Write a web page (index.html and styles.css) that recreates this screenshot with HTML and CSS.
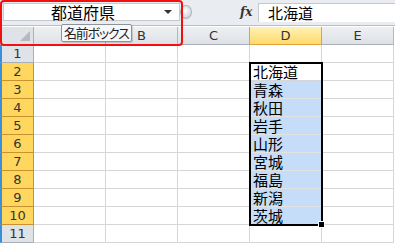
FILE: index.html
```html
<!DOCTYPE html>
<html lang="ja">
<head>
<meta charset="utf-8">
<link rel="stylesheet" href="styles.css">
</head>
<body>
<div class="app">
  <div class="fbar">
    <div class="namebox">
      <span class="nb-text">都道府県</span>
      <span class="nb-arrow"></span>
    </div>
    <div class="grip"></div>
    <div class="fx">fx</div>
    <div class="finput">北海道</div>
  </div>
  <div class="sheet">
    <div class="corner"><span class="tri"></span></div>
    <div class="ch">A</div>
    <div class="ch">B</div>
    <div class="ch">C</div>
    <div class="ch sel">D</div>
    <div class="ch">E</div>

    <div class="rh">1</div><div class="c"></div><div class="c"></div><div class="c"></div><div class="c"></div><div class="c"></div>
    <div class="rh sel">2</div><div class="c"></div><div class="c"></div><div class="c"></div><div class="c act">北海道</div><div class="c"></div>
    <div class="rh sel">3</div><div class="c"></div><div class="c"></div><div class="c"></div><div class="c hi">青森</div><div class="c"></div>
    <div class="rh sel">4</div><div class="c"></div><div class="c"></div><div class="c"></div><div class="c hi">秋田</div><div class="c"></div>
    <div class="rh sel">5</div><div class="c"></div><div class="c"></div><div class="c"></div><div class="c hi">岩手</div><div class="c"></div>
    <div class="rh sel">6</div><div class="c"></div><div class="c"></div><div class="c"></div><div class="c hi">山形</div><div class="c"></div>
    <div class="rh sel">7</div><div class="c"></div><div class="c"></div><div class="c"></div><div class="c hi">宮城</div><div class="c"></div>
    <div class="rh sel">8</div><div class="c"></div><div class="c"></div><div class="c"></div><div class="c hi">福島</div><div class="c"></div>
    <div class="rh sel">9</div><div class="c"></div><div class="c"></div><div class="c"></div><div class="c hi">新潟</div><div class="c"></div>
    <div class="rh sel">10</div><div class="c"></div><div class="c"></div><div class="c"></div><div class="c hi">茨城</div><div class="c"></div>
    <div class="rh">11</div><div class="c"></div><div class="c"></div><div class="c"></div><div class="c"></div><div class="c"></div>

    <div class="selbox"><span class="handle"></span></div>
  </div>
  <div class="redmark"></div>
  <div class="tip">名前ボックス</div>
</div>
</body>
</html>
```

FILE: styles.css
```css
html, body {
  margin: 0;
  padding: 0;
  background: #fff;
}
.app {
  position: relative;
  width: 395px;
  height: 244px;
  overflow: hidden;
  font-family: "Noto Sans CJK JP", "DejaVu Sans", sans-serif;
}
.fbar {
  height: 22px;
  background: #e9edf1;
  border-bottom: 1px solid #b9bec6;
  display: flex;
  align-items: stretch;
  padding-top: 3px;
  margin-bottom: 1px;
}
.namebox {
  margin-left: 3px;
  width: 177px;
  height: 18px;
  background: #fff;
  border: 1px solid #c5cad2;
  box-sizing: border-box;
  display: flex;
  align-items: center;
  position: relative;
}
.nb-text {
  flex: 1;
  text-align: center;
  font-size: 16px;
  line-height: 18px;
  color: #000;
  padding-right: 2px;
}
.nb-arrow {
  width: 0;
  height: 0;
  border-left: 4px solid transparent;
  border-right: 4px solid transparent;
  border-top: 4px solid #333;
  margin-right: 7px;
}
.grip {
  width: 12px;
  height: 14px;
  margin: 2px 0 0 0;
  border-radius: 50%;
  background: radial-gradient(circle at 40% 40%, #ffffff 0%, #d9dde2 60%, #b6bbc2 100%);
  border: 1px solid #b0b5bc;
  box-sizing: border-box;
}
.fx {
  margin-left: 48px;
  width: 18px;
  font-family: "DejaVu Serif", "Liberation Serif", serif;
  font-style: italic;
  font-weight: bold;
  font-size: 12px;
  line-height: 18px;
  color: #333;
}
.finput {
  flex: 1;
  height: 19px;
  background: #fff;
  border-left: 1px solid #c5cad2;
  border-top: 1px solid #c5cad2;
  box-sizing: border-box;
  padding-left: 9px;
  font-size: 15px;
  line-height: 18px;
  color: #000;
}
.sheet {
  position: relative;
  display: grid;
  grid-template-columns: 34px repeat(5, 72px);
  grid-template-rows: 18px repeat(11, 18px);
}
.corner {
  background: #dfe3e8;
  border-right: 1px solid #a9afb8;
  border-bottom: 1px solid #a9afb8;
  box-sizing: border-box;
  position: relative;
}
.tri {
  position: absolute;
  right: 3px;
  bottom: 3px;
  width: 0;
  height: 0;
  border-left: 10px solid transparent;
  border-bottom: 10px solid #b4bac2;
}
.ch {
  background: linear-gradient(#eef0f3, #dde1e6);
  border-right: 1px solid #b3b8c0;
  border-bottom: 1px solid #a9afb8;
  box-sizing: border-box;
  text-align: center;
  font-family: "DejaVu Sans", sans-serif;
  font-size: 13px;
  line-height: 17px;
  color: #333;
}
.ch.sel {
  background: linear-gradient(#fff2b6, #fdd96a);
  border-left: 1px solid #e0a23e;
  border-right: 1px solid #e0a23e;
  border-bottom: 1px solid #e0a23e;
  margin-left: -1px;
}
.rh {
  background: #dfe3e8;
  border-left: 2px solid #3a8edc;
  border-right: 1px solid #a9afb8;
  border-bottom: 1px solid #a9afb8;
  box-sizing: border-box;
  text-align: center;
  font-family: "DejaVu Sans", sans-serif;
  font-size: 13px;
  line-height: 18px;
  color: #333;
}
.rh.sel {
  background: #ffd75e;
  border-right: 1px solid #c8922e;
  border-bottom: 1px solid #c8922e;
}
.c {
  border-right: 1px solid #d6d6d6;
  border-bottom: 1px solid #d6d6d6;
  box-sizing: border-box;
  font-size: 15px;
  line-height: 17px;
  padding-left: 3px;
  color: #000;
  white-space: nowrap;
}
.c.hi {
  background: #c5ddf8;
  border-bottom-color: #e2e2e2;
}
.selbox {
  position: absolute;
  left: 249px;
  top: 35px;
  width: 74px;
  height: 164px;
  border: 2px solid #000;
  box-sizing: border-box;
  pointer-events: none;
}
.handle {
  position: absolute;
  right: -4px;
  bottom: -4px;
  width: 5px;
  height: 5px;
  background: #000;
  border: 1px solid #fff;
}
.redmark {
  position: absolute;
  left: 0;
  top: 0;
  width: 183px;
  height: 46px;
  border: 2.5px solid #f01010;
  border-radius: 4px;
  box-sizing: border-box;
}
.tip {
  position: absolute;
  left: 61px;
  top: 24px;
  height: 16px;
  padding: 0 2px;
  background: #f6f7f9;
  border: 1px solid #8e939a;
  border-radius: 2px;
  font-size: 13px;
  line-height: 16px;
  letter-spacing: -1.2px;
  color: #222;
  font-feature-settings: "palt";
  white-space: nowrap;
  box-shadow: 1px 1px 1px rgba(0,0,0,0.15);
}
```
